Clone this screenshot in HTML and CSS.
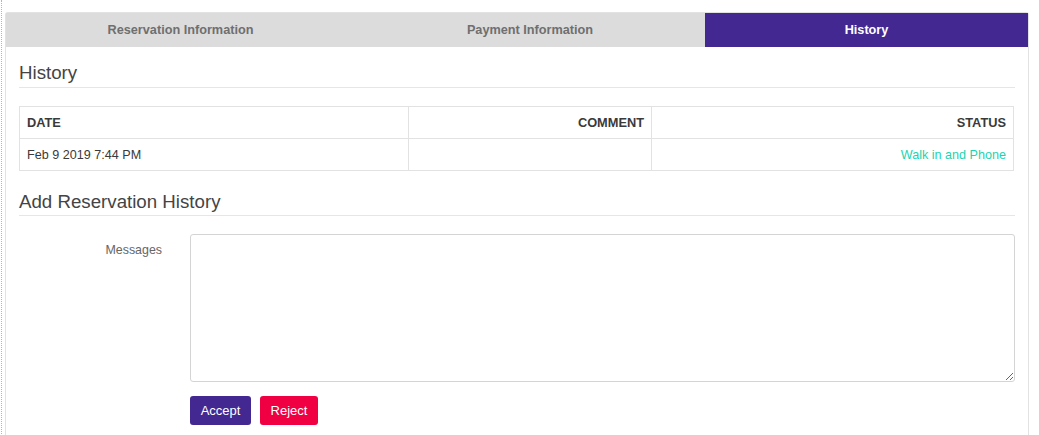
FILE: index.html
```html
<!DOCTYPE html>
<html>
<head>
<meta charset="utf-8">
<link rel="stylesheet" href="styles.css">
</head>
<body>
<div class="page">
  <div class="panel">
    <div class="tabs">
      <div class="tab">Reservation Information</div>
      <div class="tab">Payment Information</div>
      <div class="tab active">History</div>
    </div>
    <div class="content">
      <h3 class="section-title">History</h3>
      <table class="history-table">
        <thead>
          <tr>
            <th class="col-date">DATE</th>
            <th class="col-comment">COMMENT</th>
            <th class="col-status">STATUS</th>
          </tr>
        </thead>
        <tbody>
          <tr>
            <td class="col-date">Feb 9 2019 7:44 PM</td>
            <td class="col-comment"></td>
            <td class="col-status status-text">Walk in and Phone</td>
          </tr>
        </tbody>
      </table>
      <h3 class="section-title second">Add Reservation History</h3>
      <div class="form-row">
        <label class="form-label">Messages</label>
        <div class="form-field">
          <textarea class="messages"></textarea>
          <div class="actions">
            <button class="btn btn-accept">Accept</button>
            <button class="btn btn-reject">Reject</button>
          </div>
        </div>
      </div>
    </div>
  </div>
</div>
</body>
</html>
```
FILE: styles.css
```css
* { box-sizing: border-box; }
html, body { margin: 0; padding: 0; background: #fff; }
body {
  font-family: "Liberation Sans", Arial, sans-serif;
  color: #333;
  font-size: 12.6px;
}
.page {
  margin-left: 1px;
  border-left: 1px dotted #b5b5b5;
  padding: 12px 0 0 3px;
  min-height: 435px;
}
.panel {
  width: 1024px;
  border: 1px solid #e2e2e2;
  border-bottom: none;
  border-radius: 3px 3px 0 0;
  min-height: 430px;
}
.tabs {
  display: grid;
  grid-template-columns: 349px 350px 1fr;
  background: #dcdcdc;
  height: 34px;
}
.tab {
  display: flex;
  align-items: center;
  justify-content: center;
  font-weight: bold;
  font-size: 12.7px;
  color: #6f6f6f;
}
.tab.active {
  background: #422890;
  color: #fff;
}
.content {
  padding: 0 13px 0 13px;
}
.section-title {
  margin: 15px 0 0 0;
  font-weight: normal;
  font-size: 18.7px;
  line-height: 22px;
  color: #444;
  padding-bottom: 3px;
  border-bottom: 1px solid #e6e6e6;
}
.section-title.second {
  margin-top: 20px;
  padding-bottom: 2px;
}
.history-table {
  margin-top: 18px;
  width: 995px;
  border-collapse: collapse;
  border: 1px solid #dedede;
}
.history-table th,
.history-table td {
  border: 1px solid #e2e2e2;
  height: 32px;
  padding: 0 7px;
  font-size: 12.6px;
  vertical-align: middle;
}
.history-table th {
  font-weight: bold;
  font-size: 12.8px;
  color: #3a3a3a;
}
.history-table td { color: #3a3a3a; }
.col-date { width: 389px; text-align: left; }
.col-comment { width: 243px; text-align: right; }
.col-status { text-align: right; }
.history-table td.status-text { color: #1ad4b1; }
.form-row {
  display: flex;
  margin-top: 18px;
}
.form-label {
  width: 143px;
  text-align: right;
  padding-top: 9px;
  color: #666;
  font-size: 12.4px;
  margin-right: 28px;
}
.form-field {
  width: 825px;
}
.messages {
  display: block;
  width: 825px;
  height: 148px;
  border: 1px solid #d4d4d4;
  border-radius: 3px;
  margin: 0;
  font-family: inherit;
}
.actions {
  display: flex;
  gap: 9px;
  margin-top: 14px;
}
.btn {
  height: 29px;
  border: none;
  border-radius: 3px;
  padding: 0;
  font-family: "Liberation Sans", Arial, sans-serif;
  font-size: 13px;
  color: #fff;
  cursor: pointer;
}
.btn-accept { background: #422890; width: 61px; }
.btn-reject { background: #f00042; width: 58px; }
```
